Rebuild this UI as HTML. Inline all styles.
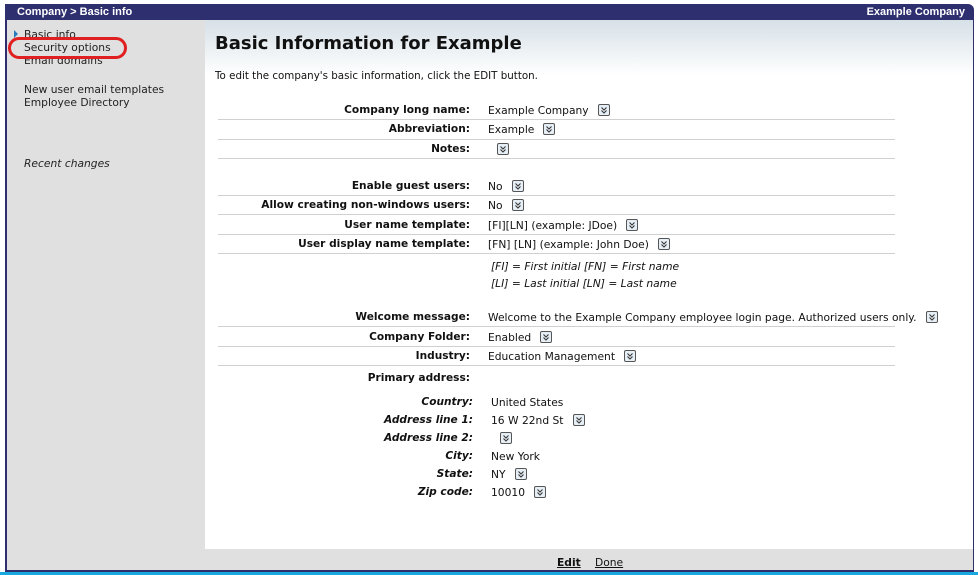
<!DOCTYPE html>
<html><head><meta charset="utf-8"><style>
*{margin:0;padding:0;box-sizing:border-box}
body{width:978px;height:575px;background:#fff;position:relative;overflow:hidden;font-family:"DejaVu Sans","Liberation Sans",sans-serif;font-size:10.7px;color:#111}
.a{position:absolute;white-space:nowrap}
.l{position:absolute;right:508px;font-weight:bold;white-space:nowrap;margin-top:1px;font-size:10.6px}
.li{position:absolute;right:505px;font-weight:bold;font-style:italic;white-space:nowrap;margin-top:1px;font-size:10.6px}
.v{position:absolute;left:488px;white-space:nowrap;margin-top:1px}
.v2{position:absolute;left:491px;white-space:nowrap;margin-top:1px}
.hr{position:absolute;left:218px;width:677px;height:1px;background:#d0d0d0}
.ic{display:inline-block;width:12px;height:12px;border:1px solid #555;border-radius:2px;background:#e6eef6;vertical-align:-2px;margin-left:9px;position:relative}
.ic svg{position:absolute;left:1px;top:1px}
.nav{position:absolute;left:24px;color:#222;font-size:10.7px;margin-top:1px}
</style></head><body>
<div class="a" style="left:5px;top:4px;width:969px;height:568px;background:#2e2f6e;border-radius:0 6px 0 0"></div>
<div class="a" style="left:0;top:572px;width:978px;height:3px;background:#1aa8e0"></div>
<div class="a" style="left:7px;top:20px;width:966px;height:550px;background:#e0e0e0"></div>
<div class="a" style="left:205px;top:20px;width:768px;height:529px;background:linear-gradient(#d6e0e7,#fff 55px)"></div>
<div class="a" style="left:17px;top:6px;color:#fff;font-weight:bold;font-size:11px;font-family:'Liberation Sans',sans-serif">Company &gt; Basic info</div>
<div class="a" style="right:13px;top:6px;color:#fff;font-weight:bold;font-size:11px;font-family:'Liberation Sans',sans-serif">Example Company</div>
<div class="a" style="left:14px;top:30px;width:0;height:0;border-left:4px solid #2a7ac0;border-top:4px solid transparent;border-bottom:4px solid transparent"></div>
<div class="nav" style="top:27px">Basic info</div>
<div class="nav" style="top:53px">Email domains</div>
<div class="a" style="left:17px;top:39px;width:98px;height:16px;background:#e0e0e0"></div>
<div class="nav" style="top:40px">Security options</div>
<div class="a" style="left:8px;top:37px;width:119px;height:22px;border:3px solid #e02020;border-radius:11px"></div>
<div class="nav" style="top:82px">New user email templates</div>
<div class="nav" style="top:95px">Employee Directory</div>
<div class="nav" style="top:156px;font-style:italic">Recent changes</div>
<div class="a" style="left:215px;top:33px;font-size:18px;font-weight:bold;color:#111">Basic Information for Example</div>
<div class="a" style="left:215px;top:70px;font-size:10.3px">To edit the company's basic information, click the EDIT button.</div>

<div class="l" style="top:103px">Company long name:</div><div class="v" style="top:103px">Example Company<span class="ic"><svg width="8" height="8"><path d="M1.5 1.5L4 4L6.5 1.5M1.5 4.5L4 7L6.5 4.5" stroke="#333" fill="none" stroke-width="1.1"/></svg></span></div>
<div class="hr" style="top:119px"></div>
<div class="l" style="top:122px">Abbreviation:</div><div class="v" style="top:122px">Example<span class="ic"><svg width="8" height="8"><path d="M1.5 1.5L4 4L6.5 1.5M1.5 4.5L4 7L6.5 4.5" stroke="#333" fill="none" stroke-width="1.1"/></svg></span></div>
<div class="hr" style="top:139px"></div>
<div class="l" style="top:142px">Notes:</div><div class="v" style="top:142px"><span class="ic"><svg width="8" height="8"><path d="M1.5 1.5L4 4L6.5 1.5M1.5 4.5L4 7L6.5 4.5" stroke="#333" fill="none" stroke-width="1.1"/></svg></span></div>
<div class="hr" style="top:158px"></div>

<div class="l" style="top:179px">Enable guest users:</div><div class="v" style="top:179px">No<span class="ic"><svg width="8" height="8"><path d="M1.5 1.5L4 4L6.5 1.5M1.5 4.5L4 7L6.5 4.5" stroke="#333" fill="none" stroke-width="1.1"/></svg></span></div>
<div class="hr" style="top:195px"></div>
<div class="l" style="top:198px">Allow creating non-windows users:</div><div class="v" style="top:198px">No<span class="ic"><svg width="8" height="8"><path d="M1.5 1.5L4 4L6.5 1.5M1.5 4.5L4 7L6.5 4.5" stroke="#333" fill="none" stroke-width="1.1"/></svg></span></div>
<div class="hr" style="top:214px"></div>
<div class="l" style="top:218px">User name template:</div><div class="v" style="top:218px">[FI][LN] (example: JDoe)<span class="ic"><svg width="8" height="8"><path d="M1.5 1.5L4 4L6.5 1.5M1.5 4.5L4 7L6.5 4.5" stroke="#333" fill="none" stroke-width="1.1"/></svg></span></div>
<div class="hr" style="top:234px"></div>
<div class="l" style="top:237px">User display name template:</div><div class="v" style="top:237px">[FN] [LN] (example: John Doe)<span class="ic"><svg width="8" height="8"><path d="M1.5 1.5L4 4L6.5 1.5M1.5 4.5L4 7L6.5 4.5" stroke="#333" fill="none" stroke-width="1.1"/></svg></span></div>
<div class="hr" style="top:253px"></div>
<div class="v" style="top:259px;left:491px;font-style:italic">[FI] = First initial [FN] = First name</div>
<div class="v" style="top:276px;left:491px;font-style:italic">[LI] = Last initial [LN] = Last name</div>

<div class="l" style="top:310px">Welcome message:</div><div class="v" style="top:310px">Welcome to the Example Company employee login page. Authorized users only.<span class="ic"><svg width="8" height="8"><path d="M1.5 1.5L4 4L6.5 1.5M1.5 4.5L4 7L6.5 4.5" stroke="#333" fill="none" stroke-width="1.1"/></svg></span></div>
<div class="hr" style="top:326px"></div>
<div class="l" style="top:330px">Company Folder:</div><div class="v" style="top:330px">Enabled<span class="ic"><svg width="8" height="8"><path d="M1.5 1.5L4 4L6.5 1.5M1.5 4.5L4 7L6.5 4.5" stroke="#333" fill="none" stroke-width="1.1"/></svg></span></div>
<div class="hr" style="top:346px"></div>
<div class="l" style="top:349px">Industry:</div><div class="v" style="top:349px">Education Management<span class="ic"><svg width="8" height="8"><path d="M1.5 1.5L4 4L6.5 1.5M1.5 4.5L4 7L6.5 4.5" stroke="#333" fill="none" stroke-width="1.1"/></svg></span></div>
<div class="hr" style="top:365px"></div>
<div class="l" style="top:371px">Primary address:</div>

<div class="li" style="top:395px">Country:</div><div class="v2" style="top:395px">United States</div>
<div class="li" style="top:413px">Address line 1:</div><div class="v2" style="top:413px">16 W 22nd St<span class="ic"><svg width="8" height="8"><path d="M1.5 1.5L4 4L6.5 1.5M1.5 4.5L4 7L6.5 4.5" stroke="#333" fill="none" stroke-width="1.1"/></svg></span></div>
<div class="li" style="top:431px">Address line 2:</div><div class="v2" style="top:431px"><span class="ic"><svg width="8" height="8"><path d="M1.5 1.5L4 4L6.5 1.5M1.5 4.5L4 7L6.5 4.5" stroke="#333" fill="none" stroke-width="1.1"/></svg></span></div>
<div class="li" style="top:449px">City:</div><div class="v2" style="top:449px">New York</div>
<div class="li" style="top:467px">State:</div><div class="v2" style="top:467px">NY<span class="ic"><svg width="8" height="8"><path d="M1.5 1.5L4 4L6.5 1.5M1.5 4.5L4 7L6.5 4.5" stroke="#333" fill="none" stroke-width="1.1"/></svg></span></div>
<div class="li" style="top:485px">Zip code:</div><div class="v2" style="top:485px">10010<span class="ic"><svg width="8" height="8"><path d="M1.5 1.5L4 4L6.5 1.5M1.5 4.5L4 7L6.5 4.5" stroke="#333" fill="none" stroke-width="1.1"/></svg></span></div>

<div class="a" style="left:557px;top:556px;font-weight:bold;text-decoration:underline;font-size:10.7px">Edit</div>
<div class="a" style="left:595px;top:556px;text-decoration:underline;font-size:10.7px">Done</div>
</body></html>
